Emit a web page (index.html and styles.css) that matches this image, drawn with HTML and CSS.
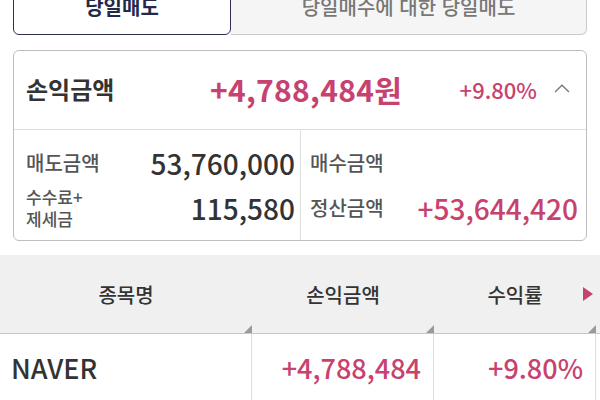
FILE: index.html
```html
<!DOCTYPE html>
<html lang="ko">
<head>
    <meta charset="UTF-8">
    <meta name="viewport" content="width=device-width, initial-scale=1.0">
    <title>당일매도</title>
    <link rel="stylesheet" href="styles.css">
</head>
<body>
    <div class="tabs">
        <div class="tab active">당일매도</div>
        <div class="tab">당일매수에 대한 당일매도</div>
    </div>

    <div class="summary-card">
        <div class="summary-head">
            <span class="head-label">손익금액</span>
            <span class="head-amount up">+4,788,484원</span>
            <span class="head-rate up">+9.80%</span>
            <svg class="chevron" width="16" height="9" viewBox="0 0 16 9">
                <polyline points="1,8 8,1.2 15,8" fill="none" stroke="#777" stroke-width="1.3"/>
            </svg>
        </div>
        <div class="summary-detail">
            <div class="detail-col left">
                <div class="detail-row">
                    <span class="detail-label">매도금액</span>
                    <span class="detail-value">53,760,000</span>
                </div>
                <div class="detail-row">
                    <span class="detail-label small">수수료+<br>제세금</span>
                    <span class="detail-value">115,580</span>
                </div>
            </div>
            <div class="detail-col">
                <div class="detail-row">
                    <span class="detail-label">매수금액</span>
                    <span class="detail-value"></span>
                </div>
                <div class="detail-row">
                    <span class="detail-label">정산금액</span>
                    <span class="detail-value up">+53,644,420</span>
                </div>
            </div>
        </div>
    </div>

    <div class="stock-table">
        <div class="table-head">
            <div class="th">종목명</div>
            <div class="th">손익금액</div>
            <div class="th more">수익률</div>
            <div class="th"></div>
        </div>
        <div class="table-row">
            <div class="td name">NAVER</div>
            <div class="td up">+4,788,484</div>
            <div class="td up">+9.80%</div>
            <div class="td"></div>
        </div>
    </div>
</body>
</html>
```

FILE: styles.css
```css
body {
    margin: 0;
    padding: 0;
    background: #fff;
    color: #333;
    font-family: "Noto Sans CJK KR", "Noto Sans", sans-serif;
    overflow: hidden;
}
.up {
    color: #c8426f;
}

/* tabs (scrolled half out of view) */
.tabs {
    display: flex;
    margin: -22px 13px 0 13px;
    height: 57px;
}
.tab {
    display: flex;
    justify-content: center;
    align-items: center;
    font-size: 20px;
    font-weight: 500;
    color: #777;
    background: #f5f5f5;
    border: 1px solid #c9c9c9;
    border-left: none;
    border-radius: 0 0 6px 0;
    flex: 1;
}
.tab.active {
    flex: 0 0 218px;
    box-sizing: border-box;
    color: #24284a;
    font-weight: bold;
    background: #fff;
    border: 1.5px solid #2d3050;
    border-radius: 0 0 6px 6px;
}

/* summary card */
.summary-card {
    margin: 15px 13px 0 13px;
    border: 1px solid #bdbdbd;
    border-radius: 6px;
}
.summary-head {
    display: flex;
    align-items: center;
    height: 75px;
    padding: 0 16px 3px 12px;
    border-bottom: 1px solid #dedede;
}
.head-label {
    width: 184px;
    font-size: 24px;
    font-weight: bold;
    color: #333;
}
.head-amount {
    font-size: 30px;
    font-weight: bold;
    letter-spacing: 0.3px;
}
.head-rate {
    margin-left: auto;
    font-size: 22px;
    font-weight: 500;
}
.chevron {
    margin-left: 17px;
}
.summary-detail {
    display: grid;
    grid-template-columns: 287px 1fr;
}
.detail-col {
    padding: 10px 8px 10px 9px;
}
.detail-col.left {
    padding: 10px 5px 10px 12px;
    border-right: 1px solid #dedede;
}
.detail-row {
    display: flex;
    justify-content: space-between;
    align-items: center;
    height: 45px;
}
.detail-label {
    font-size: 20px;
    font-weight: 500;
    color: #555;
}
.detail-label.small {
    font-size: 17px;
    line-height: 22px;
}
.detail-value {
    font-size: 28px;
    font-weight: 500;
    color: #333;
}
.detail-value.up {
    color: #c8426f;
}

/* stock table */
.stock-table {
    margin-top: 14px;
}
.table-head, .table-row {
    display: grid;
    grid-template-columns: 252px 182px 162px 1fr;
}
.table-head {
    height: 78px;
    background: #f0f0f0;
    border-bottom: 1px solid #c8c8c8;
}
.th {
    position: relative;
    display: flex;
    justify-content: center;
    align-items: center;
    font-size: 20px;
    font-weight: 500;
    color: #333;
}
.th::after {
    content: "";
    position: absolute;
    right: 0;
    bottom: 0;
    border-style: solid;
    border-width: 0 0 8px 8px;
    border-color: transparent transparent #9a9a9a transparent;
}
.th:last-child::after {
    display: none;
}
.th.more::before {
    content: "";
    position: absolute;
    right: 3px;
    top: 32px;
    border-style: solid;
    border-width: 7.5px 0 7.5px 10px;
    border-color: transparent transparent transparent #c8426f;
}
.table-row {
    height: 66px;
}
.td {
    display: flex;
    justify-content: flex-end;
    align-items: center;
    padding: 0 12px;
    font-size: 27px;
    font-weight: 500;
    border-right: 1px solid #dedede;
}
.td.name {
    justify-content: flex-start;
    padding-left: 11px;
    color: #333;
}
```
